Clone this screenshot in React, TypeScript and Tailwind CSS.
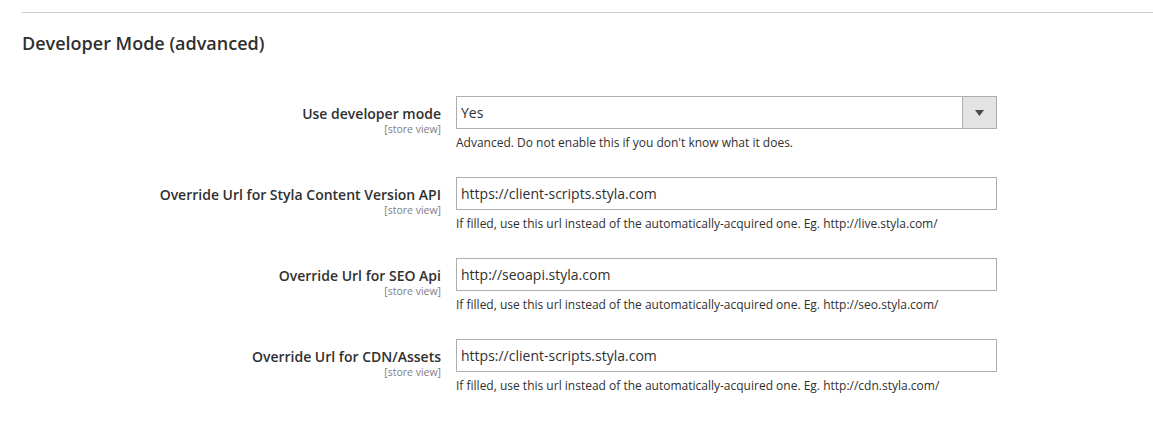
const rows = [
  {
    label: 'Use developer mode',
    type: 'select',
    value: 'Yes',
    note: "Advanced. Do not enable this if you don't know what it does.",
  },
  {
    label: 'Override Url for Styla Content Version API',
    type: 'input',
    value: 'https://client-scripts.styla.com',
    note: 'If filled, use this url instead of the automatically-acquired one. Eg. http://live.styla.com/',
  },
  {
    label: 'Override Url for SEO Api',
    type: 'input',
    value: 'http://seoapi.styla.com',
    note: 'If filled, use this url instead of the automatically-acquired one. Eg. http://seo.styla.com/',
  },
  {
    label: 'Override Url for CDN/Assets',
    type: 'input',
    value: 'https://client-scripts.styla.com',
    note: 'If filled, use this url instead of the automatically-acquired one. Eg. http://cdn.styla.com/',
  },
];

export default function App() {
  return (
    <div
      className="min-h-[433px] bg-white pl-[22px] pt-[12px] text-[#303030]"
      style={{ fontFamily: '"Open Sans", "Noto Sans", sans-serif' }}
    >
      <div className="border-t border-[#cccccc]" />
      <h2 className="mt-[18px] text-[18px] leading-[25px] font-semibold">Developer Mode (advanced)</h2>

      <div className="mt-[40px] flex flex-col">
        {rows.map((row) => (
          <div key={row.label} className="flex h-[81px]">
            {/* Label column */}
            <div className="w-[419px] pt-[8px] text-right">
              <div className="text-[14px] leading-[19px] font-semibold">{row.label}</div>
              <div className="text-[10.5px] leading-[12px] text-[#808080]">[store view]</div>
            </div>

            {/* Control column */}
            <div className="ml-[15px] w-[541px]">
              {row.type === 'select' ? (
                <div className="flex h-[33px] border border-[#adadad] bg-white">
                  <div className="flex flex-1 items-center pl-[4px] text-[14px]">{row.value}</div>
                  <div className="flex w-[34px] items-center justify-center border-l border-[#adadad] bg-[#e3e3e3]">
                    <svg width="9" height="6" viewBox="0 0 9 6">
                      <path d="M0 0h9L4.5 6z" fill="#514943" />
                    </svg>
                  </div>
                </div>
              ) : (
                <div className="flex h-[33px] items-center border border-[#adadad] bg-white pl-[4px] text-[14px]">
                  {row.value}
                </div>
              )}
              <div className="mt-[6px] text-[12px] leading-[16px]">{row.note}</div>
            </div>
          </div>
        ))}
      </div>
    </div>
  );
}
